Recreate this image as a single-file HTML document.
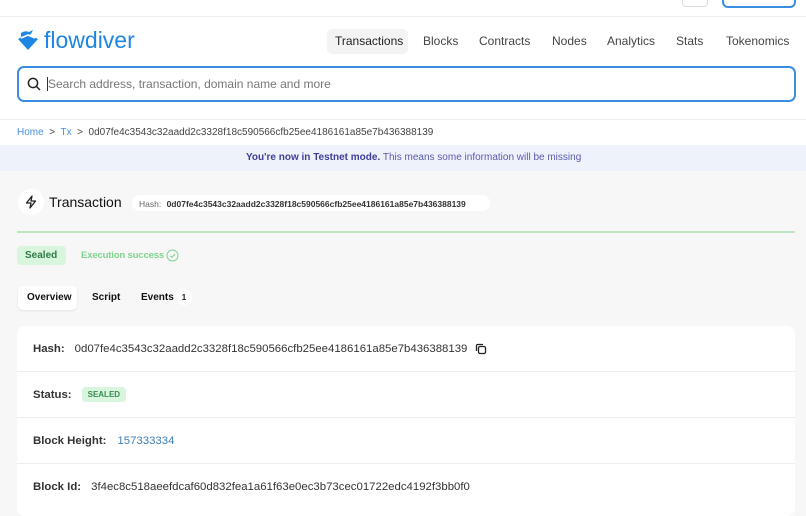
<!DOCTYPE html>
<html><head><meta charset="utf-8"><style>
*{box-sizing:border-box;margin:0;padding:0}
body{width:806px;height:506px;overflow:hidden;font-family:"Liberation Sans",sans-serif;background:#f7f7f7;position:relative;color:#222}
.abs{position:absolute}
.top{left:0;top:0;width:806px;height:171px;background:#fff}
.nav span{position:absolute;top:34px;font-size:12px;color:#444;font-weight:500}
.row{position:absolute;left:17px;width:778px;height:46px;background:#fff;border-bottom:1px solid #eee;font-size:11.4px;display:flex;align-items:center;padding-left:16px}
.row b{font-weight:700;color:#333;margin-right:10px}
</style></head><body>
<div class="abs top"></div>
<div class="abs" style="left:0;top:16px;width:806px;height:1px;background:#eee"></div>
<div class="abs" style="left:682px;top:-6px;width:26px;height:13px;border:1px solid #ddd;border-radius:4px"></div>
<div class="abs" style="left:722px;top:-6px;width:74px;height:14px;border:2px solid #3a8de0;border-radius:6px"></div>
<svg class="abs" style="left:17px;top:29px" width="22" height="22" viewBox="0 0 22 22"><path d="M1 10 L11 5 L21 10 L11 21Z" fill="#1d86e3"/><path d="M4 8 L4 4 Q8 1 12 3 L16 1 L14 5 Z" fill="#1d86e3"/><path d="M4 9 L11 6 L18 9" stroke="#fff" stroke-width="1.6" fill="none"/></svg>
<div class="abs" style="left:44px;top:27px;font-size:23px;color:#1d86e3">flowdiver</div>
<div class="abs" style="left:327px;top:29px;width:81px;height:25px;background:#f3f3f3;border-radius:5px"></div>
<div class="nav">
<span style="left:335px;color:#222">Transactions</span>
<span style="left:423px">Blocks</span>
<span style="left:479px">Contracts</span>
<span style="left:552px">Nodes</span>
<span style="left:607px">Analytics</span>
<span style="left:676px">Stats</span>
<span style="left:726px">Tokenomics</span>
</div>
<div class="abs" style="left:17px;top:66px;width:779px;height:36px;border:2px solid #3a8de0;border-radius:7px"></div>
<svg class="abs" style="left:27px;top:77px" width="14" height="14" viewBox="0 0 14 14"><circle cx="6" cy="6" r="4.6" stroke="#222" stroke-width="1.5" fill="none"/><path d="M9.5 9.5L13 13" stroke="#222" stroke-width="1.5"/></svg>
<div class="abs" style="left:47px;top:77px;font-size:12px;color:#777"><span style="border-left:1px solid #333"></span>Search address, transaction, domain name and more</div>
<div class="abs" style="left:0;top:119px;width:806px;height:1px;background:#eee"></div>
<div class="abs" style="left:17px;top:127px;font-size:10px;color:#444"><span style="color:#4a8fe0">Home</span> &nbsp;&gt;&nbsp; <span style="color:#4a8fe0">Tx</span> &nbsp;&gt;&nbsp; 0d07fe4c3543c32aadd2c3328f18c590566cfb25ee4186161a85e7b436388139</div>
<div class="abs" style="left:0;top:145px;width:806px;height:26px;background:#eef3fb"></div>
<div class="abs" style="left:246px;top:152px;font-size:10px;color:#5a5ab0"><b style="color:#3e3e98">You're now in Testnet mode.</b> This means some information will be missing</div>
<div class="abs" style="left:18px;top:189px;width:26px;height:26px;border-radius:50%;background:#fff"></div>
<svg class="abs" style="left:24px;top:195px" width="14" height="14" viewBox="0 0 14 14"><path d="M8 1L2.5 8H7L6 13L11.5 6H7Z" stroke="#222" stroke-width="1.3" fill="none" stroke-linejoin="round"/></svg>
<div class="abs" style="left:49px;top:194px;font-size:14px;color:#111;font-weight:500">Transaction</div>
<div class="abs" style="left:132px;top:195px;height:16px;width:358px;background:#fff;border-radius:8px;font-size:8.5px;padding:4px 7px;color:#666">Hash: <b style="color:#333;margin-left:3px">0d07fe4c3543c32aadd2c3328f18c590566cfb25ee4186161a85e7b436388139</b></div>
<div class="abs" style="left:17px;top:231px;width:778px;height:2px;background:#bfe5c0"></div>
<div class="abs" style="left:17px;top:246px;width:49px;height:19px;background:#d8f5de;border-radius:4px;font-size:10px;color:#2e7a46;padding:4px 0 0 8px;font-weight:700">Sealed</div>
<div class="abs" style="left:81px;top:250px;font-size:9.6px;color:#7fd38f;font-weight:700;letter-spacing:-0.2px">Execution success</div>
<svg class="abs" style="left:166px;top:249px" width="13" height="13" viewBox="0 0 13 13"><circle cx="6.5" cy="6.5" r="5.5" stroke="#7fd38f" fill="none"/><path d="M4 6.7L5.8 8.4L9 5" stroke="#7fd38f" fill="none"/></svg>
<div class="abs" style="left:18px;top:286px;width:59px;height:24px;background:#fff;border-radius:5px;box-shadow:0 1px 2px rgba(0,0,0,.08)"></div>
<div class="abs" style="left:27px;top:292px;font-size:10px;color:#111;font-weight:700">Overview</div>
<div class="abs" style="left:92px;top:292px;font-size:10px;color:#111;font-weight:700">Script</div>
<div class="abs" style="left:141px;top:292px;font-size:10px;color:#111;font-weight:700">Events</div>
<div class="abs" style="left:176px;top:289px;width:16px;height:16px;border-radius:50%;background:#fff;font-size:8px;text-align:center;padding-top:4px;font-weight:700">1</div>
<div class="abs" style="left:17px;top:326px;width:778px;height:190px;background:#fff;border-radius:8px"></div>
<div class="row" style="top:326px;border-radius:8px 8px 0 0"><b>Hash:</b><span style="color:#333">0d07fe4c3543c32aadd2c3328f18c590566cfb25ee4186161a85e7b436388139</span>
<svg style="margin-left:8px" width="12" height="12" viewBox="0 0 12 12"><rect x="3.5" y="3.5" width="7" height="7" rx="1.5" stroke="#222" stroke-width="1.3" fill="none"/><path d="M1.5 8V2.5a1 1 0 0 1 1-1H8" stroke="#222" stroke-width="1.3" fill="none"/></svg></div>
<div class="row" style="top:372px"><b>Status:</b><span style="background:#d8f5de;color:#3a8a55;font-size:8px;font-weight:700;padding:3px 6px;border-radius:4px">SEALED</span></div>
<div class="row" style="top:418px"><b>Block Height:</b><span style="color:#3d7fb8;margin-left:1px">157333334</span></div>
<div class="row" style="top:464px;border-bottom:none"><b>Block Id:</b><span style="color:#333">3f4ec8c518aeefdcaf60d832fea1a61f63e0ec3b73cec01722edc4192f3bb0f0</span></div>
</body></html>
